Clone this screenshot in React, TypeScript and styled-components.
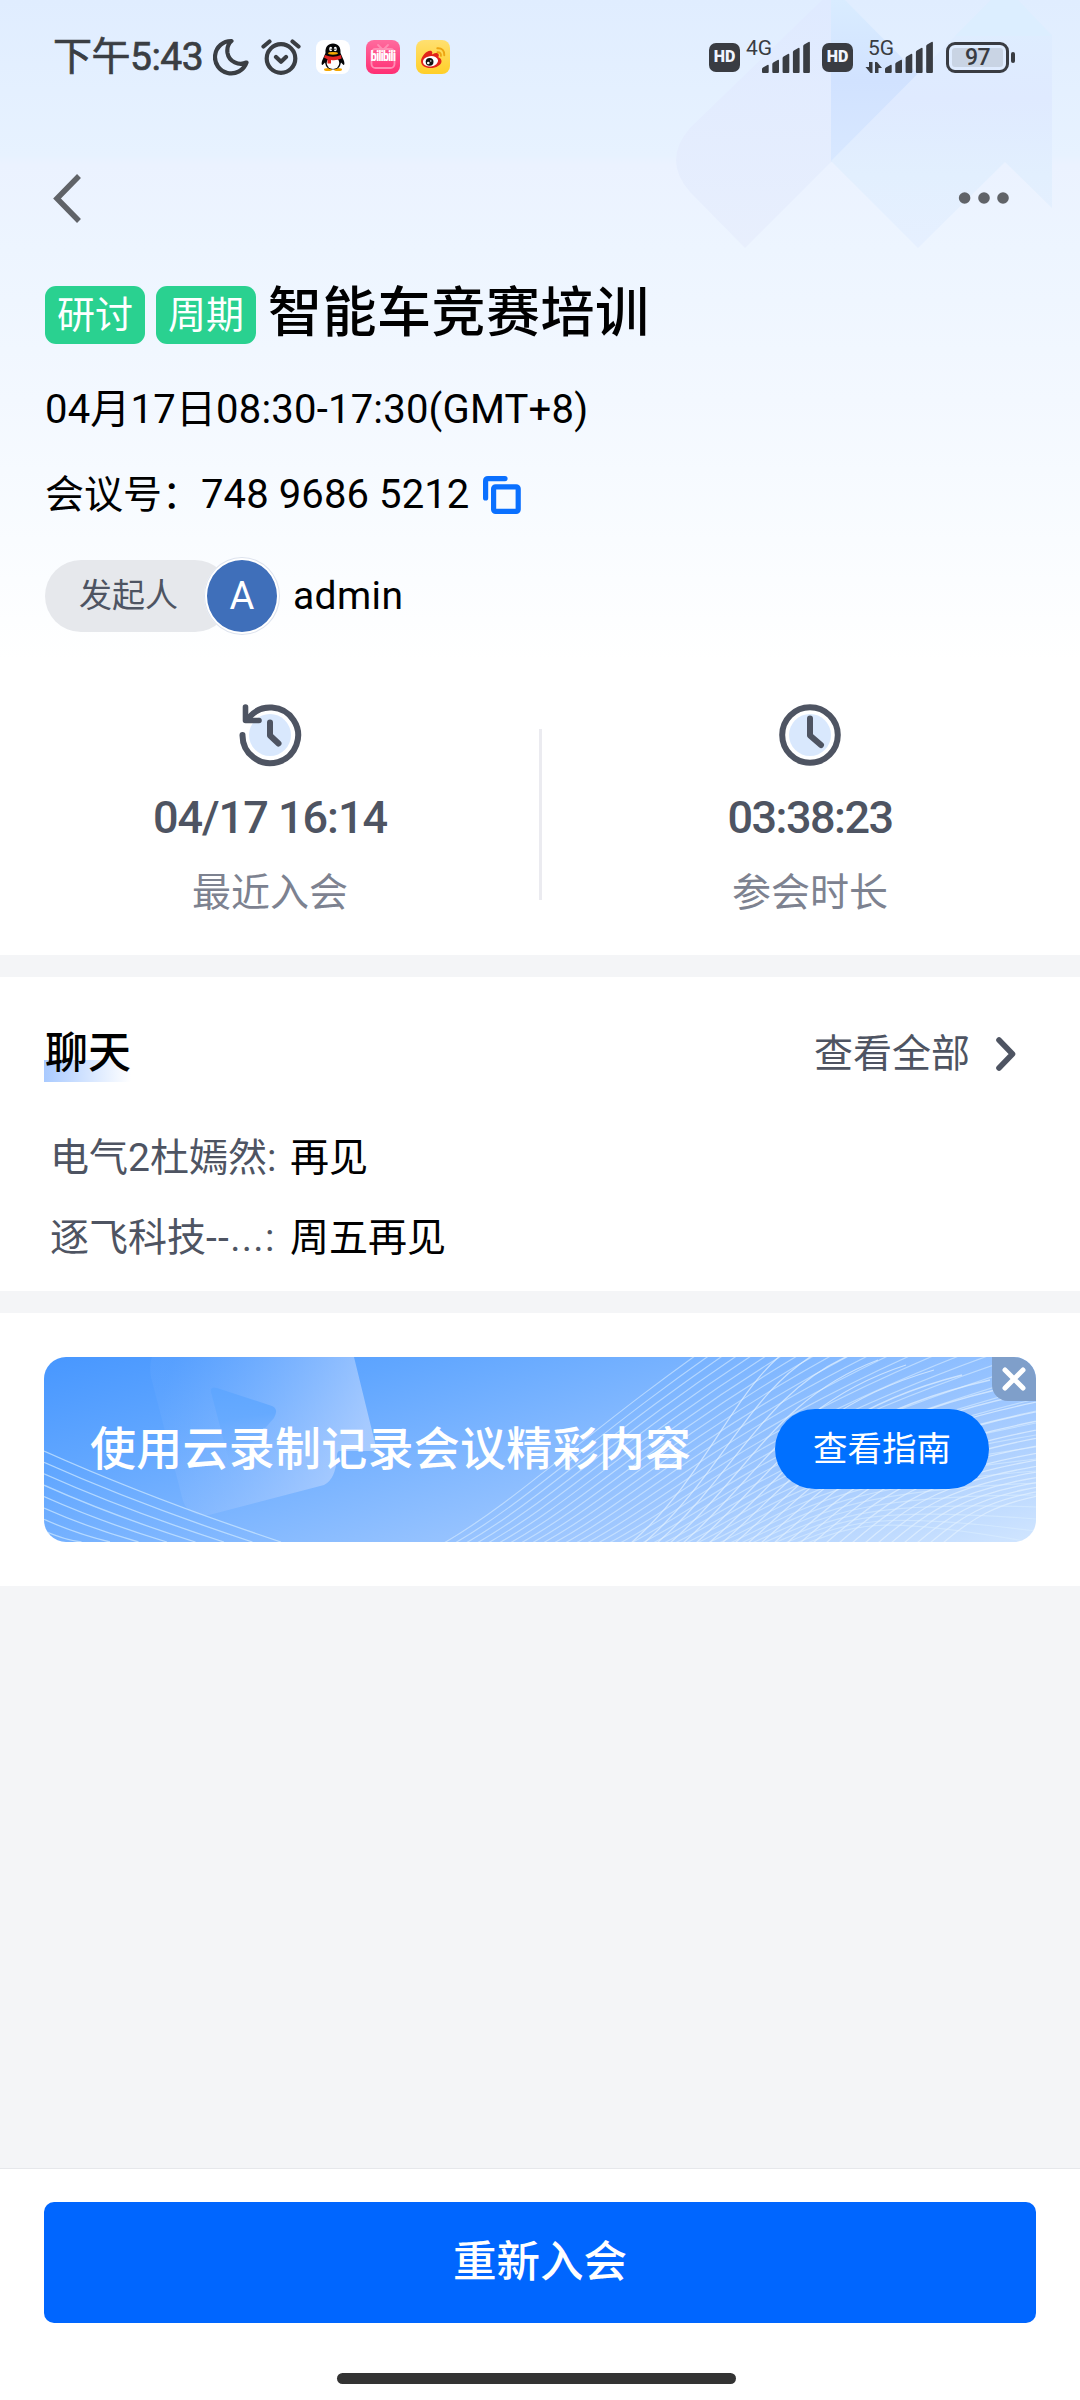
import React from "react";
import styled, { createGlobalStyle } from "styled-components";

const Global = createGlobalStyle`
  * { box-sizing: border-box; }
  body { margin: 0; background: #f4f5f7; }
`;

const sans = `Roboto, "Noto Sans CJK SC", sans-serif`;
const ink = "#4e5462";

const Screen = styled.main`
  width: 1080px;
  height: 2400px;
  display: flex;
  flex-direction: column;
  background: #f4f5f7;
  font-family: ${sans};
  color: #000;
  overflow: hidden;
  white-space: nowrap;
`;

const Label = styled.span<{ size: number; track?: number; color?: string }>`
  font-size: ${(p) => p.size}px;
  line-height: 1;
  letter-spacing: ${(p) => p.track ?? 0}px;
  color: ${(p) => p.color ?? "#000"};
`;

/* ---------- header ---------- */

const Header = styled.header`
  position: relative;
  height: 955px;
  flex: none;
  display: flex;
  flex-direction: column;
  background: linear-gradient(#e0edff 0, #e7f2ff 155px, #ebf2ff 165px, #edf5ff 250px, #f3f8ff 400px, #f9fcff 540px, #fff 660px);
`;

const Backdrop = styled.svg`
  position: absolute;
  top: 0;
  right: 0;
`;

const StatusBar = styled.div`
  position: relative;
  height: 114px;
  padding: 0 65px 0 53px;
  display: flex;
  align-items: center;
  justify-content: space-between;
`;

const StatusGroup = styled.div`
  display: flex;
  align-items: center;
`;

const Clock = styled.div`
  width: 160px;
  font-size: 39px;
  line-height: 40px;
  color: #3a3e43;
  -webkit-text-stroke: 0.7px #3a3e43;
  letter-spacing: -0.5px;
`;

const Gap = styled.i<{ w: number }>`
  width: ${(p) => p.w}px;
  flex: none;
`;

const HdBadge = styled.span`
  width: 31px;
  height: 29px;
  border-radius: 7px;
  display: grid;
  place-items: center;
  background: #393c42;
  color: #f0f5ff;
  font: 900 16px/1 ${sans};
`;

const Cell = styled.div`
  display: flex;
  height: 33px;
  position: relative;
`;

const NetLabel = styled.span<{ x: number }>`
  position: absolute;
  left: ${(p) => p.x}px;
  top: -3px;
  font: 400 21px/21px ${sans};
  color: #393c42;
`;

const Battery = styled.div`
  position: relative;
  width: 63px;
  height: 31px;
  border: 3px solid #393c42;
  border-radius: 9px;
  padding: 3px;
  &::after {
    content: "";
    position: absolute;
    left: 62px;
    top: 7px;
    width: 4px;
    height: 11px;
    border-radius: 2px;
    background: #393c42;
  }
`;

const BatteryFill = styled.div`
  height: 100%;
  border-radius: 3px;
  background: #c9d4e4;
  display: grid;
  place-items: center;
  font: 500 23px/19px ${sans};
  color: #393c42;
  letter-spacing: -0.5px;
`;

const NavBar = styled.nav`
  position: relative;
  height: 168px;
  padding: 0 70px 0 50px;
  display: flex;
  justify-content: space-between;
  svg { margin-top: 57px; }
`;

const TitleRow = styled.div`
  position: relative;
  height: 62px;
  margin-left: 45px;
  padding-top: 4px;
  display: flex;
  align-items: flex-start;
`;

const Tag = styled.span`
  width: 100px;
  height: 58px;
  margin-right: 11px;
  border-radius: 11px;
  display: grid;
  place-items: center;
  background: #2ad190;
  color: #fff;
  font-size: 38px;
  line-height: 58px;
`;

const Title = styled.h1`
  margin: 1px 0 0 1px;
  font-size: 54px;
  line-height: 54px;
  letter-spacing: 0.5px;
  font-weight: 500;
`;

const Line = styled.div<{ top: number }>`
  margin: ${(p) => p.top}px 0 0 45px;
  height: 44px;
  display: flex;
  align-items: center;
`;

const HostRow = styled.div`
  height: 78px;
  margin: 40px 0 0 45px;
  display: flex;
  align-items: center;
`;

const HostPill = styled.span`
  width: 186px;
  height: 72px;
  padding: 0 0 2px 34px;
  border-radius: 36px;
  display: flex;
  align-items: center;
  background: #e6e8ec;
`;

const Avatar = styled.span`
  width: 76px;
  height: 78px;
  margin: 0 13px 0 -27px;
  border: 3px solid #fff;
  outline: 1px solid #dde3ee;
  outline-offset: -1px;
  border-radius: 50%;
  display: grid;
  place-items: center;
  background: #3f6fba;
`;

const Stats = styled.div`
  margin-top: 68px;
  display: flex;
  height: 220px;
`;

const Stat = styled.div`
  flex: 1;
  display: flex;
  flex-direction: column;
  align-items: center;
`;

const Divider = styled.i`
  width: 3px;
  height: 171px;
  margin: 26px -1.5px 0;
  background: #ebebf0;
`;

const StatValue = styled.div<{ track: number }>`
  margin-top: 29px;
  font-size: 45px;
  line-height: 43px;
  font-weight: 500;
  color: ${ink};
  letter-spacing: ${(p) => p.track}px;
`;

const StatName = styled.div`
  margin-top: 35px;
  font-size: 39px;
  line-height: 39px;
  color: #7d8290;
`;

/* ---------- chat ---------- */

const Chat = styled.section`
  margin-top: 22px;
  height: 314px;
  flex: none;
  background: #fff;
  padding-left: 44px;
`;

const ChatHead = styled.div`
  height: 154px;
  padding: 0 58px 0 0;
  display: flex;
  align-items: center;
  justify-content: space-between;
`;

const ChatTitle = styled.h2`
  margin: 2px 0 0;
  height: 54px;
  padding-left: 1px;
  font-size: 43px;
  line-height: 50px;
  font-weight: 500;
  background: linear-gradient(90deg, #a9caff, #fff) 0 32px / 100% 22px no-repeat;
`;

const SeeAll = styled.div`
  display: flex;
  align-items: center;
  gap: 24px;
`;

const Message = styled.div`
  height: 80px;
  padding: 0 0 25px 6px;
  display: flex;
  align-items: center;
`;

const Sender = styled.div`
  width: 240px;
`;

/* ---------- banner ---------- */

const Promo = styled.section`
  margin-top: 22px;
  height: 273px;
  flex: none;
  padding: 44px;
  background: #fff;
`;

const Banner = styled.div`
  position: relative;
  height: 185px;
  border-radius: 22px;
  overflow: hidden;
  padding: 0 47px 0 46px;
  display: flex;
  align-items: center;
  justify-content: space-between;
`;

const BannerArt = styled.svg`
  position: absolute;
  inset: 0;
`;

const BannerText = styled.div`
  position: relative;
  font-size: 46px;
  line-height: 50px;
  font-weight: 500;
  letter-spacing: 0.25px;
  color: #fff;
  margin-bottom: 1px;
`;

const GuideButton = styled.button`
  position: relative;
  width: 214px;
  height: 80px;
  margin-top: -1px;
  border: 0;
  border-radius: 40px;
  background: #0070ff;
  padding: 0 0 1px;
  color: #fff;
  font: 400 34.5px/40px ${sans};
`;

const Close = styled.button`
  position: absolute;
  top: 0;
  right: 0;
  width: 44px;
  height: 44px;
  border: 0;
  padding: 0;
  border-radius: 0 22px 0 16px;
  background: #7f9fca;
  display: grid;
  place-items: center;
`;

/* ---------- footer ---------- */

const Footer = styled.footer`
  margin-top: auto;
  height: 232px;
  flex: none;
  border-top: 1px solid #e6e8eb;
  background: #fff;
  padding: 33px 44px 0;
  display: flex;
  flex-direction: column;
`;

const Rejoin = styled.button`
  height: 121px;
  border: 0;
  border-radius: 10px;
  background: #0066ff;
  color: #fff;
  padding: 1px 0 0;
  font: 500 43.5px/50px ${sans};
`;

const HomeBar = styled.i`
  width: 399px;
  height: 11px;
  margin: 50px 0 0 293px;
  border-radius: 6px;
  background: #333;
`;

/* ---------- icons ---------- */

const Signal = ({ offset, arrows }: { offset: number; arrows?: boolean }) => (
  <svg width={offset + 48} height="33" viewBox={`${-offset} 0 ${offset + 48} 33`} fill="#393c42">
    {[8, 13, 19, 25, 31].map((h, i) => (
      <path key={h} d={`M${i * 10.3} 32v${-(h - 4)}q0-1 1-1.6l4.4-2.4q1.3-.5 1.3.8V31q0 1-1 1h-4.7q-1 0-1-1z`} />
    ))}
    {arrows && <path d="M-12.500 21v11h-2l-5-6h3.500v-5zM-10 32v-11h2l5 6h-3.500v5z" />}
  </svg>
);

const Moon = () => (
  <svg width="36" height="38" viewBox="0 0 36 38" fill="none" stroke="#3a3e43" strokeWidth="4.200" strokeLinejoin="round" strokeLinecap="round">
    <path d="M18.500 3A16.200 16.200 0 1 0 33.500 24.500C26 28 16 24 14.500 15C13.800 10 15.500 5.500 18.500 3z" />
  </svg>
);

const Alarm = () => (
  <svg width="40" height="38" viewBox="0 0 40 38" fill="none" stroke="#3a3e43" strokeWidth="4.200" strokeLinecap="round" strokeLinejoin="round">
    <circle cx="20" cy="20.500" r="14.300" />
    <path d="M15 19l5 4.800 5-4.800M2.500 8.500l6-5M37.500 8.500l-6-5" />
  </svg>
);

const QQ = () => (
  <svg width="34" height="34" viewBox="0 0 34 34">
    <rect width="34" height="34" rx="8" fill="#fff" />
    <ellipse cx="12" cy="29.500" rx="4" ry="1.500" fill="#f5a800" />
    <ellipse cx="22" cy="29.500" rx="4" ry="1.500" fill="#f5a800" />
    <path d="M9.500 13C9 7 12 3.500 17 3.500S25 7 24.500 13L28 21q1 4-.5 4L25 22.500q-1 7-8 7t-8-7L6.500 25q-1.500 0-.5-4z" fill="#050505" />
    <ellipse cx="17" cy="23" rx="6.300" ry="6" fill="#fff" />
    <path d="M9 15q8 3.500 16 0l.6 3.500Q20 21 15 20v3.500h-3.500v-4.300L8 17.500z" fill="#e32422" />
    <ellipse cx="14.700" cy="9" rx="1.500" ry="2.200" fill="#fff" />
    <ellipse cx="19.300" cy="9" rx="1.500" ry="2.200" fill="#fff" />
    <circle cx="15.200" cy="9.300" r=".7" /><circle cx="18.900" cy="9.300" r=".7" />
    <ellipse cx="17" cy="13.300" rx="5" ry="1.400" fill="#f5a800" />
  </svg>
);

const Bili = styled.span`
  width: 34px;
  height: 34px;
  border-radius: 8px;
  background: linear-gradient(#ff6b9e, #ff2f74);
  display: grid;
  place-items: center;
  position: relative;
  color: #fff;
  font: 700 10.500px/1 ${sans};
  letter-spacing: -0.6px;
  svg { position: absolute; inset: 0; }
  b { position: relative; transform: scaleY(1.35); }
`;

const Weibo = () => (
  <svg width="34" height="34" viewBox="0 0 34 34">
    <defs>
      <linearGradient id="wb" x2="0" y2="1"><stop stopColor="#ffe070" /><stop offset="1" stopColor="#ffcf28" /></linearGradient>
    </defs>
    <rect width="34" height="34" rx="8" fill="url(#wb)" />
    <path d="M5 21C5 16 12 9 15.500 11q1.500 1 .5 3.500 5-2.500 6.500-.5 .8 1.200-.2 3.200 3.200 1 3.200 4C25.500 25 20 28 14.500 28S5 25.500 5 21z" fill="#e2231a" />
    <ellipse cx="14.500" cy="21.300" rx="7.600" ry="5.200" fill="#fff" transform="rotate(-7 14.500 21.300)" />
    <circle cx="13.600" cy="21.800" r="3.900" fill="#111" />
    <circle cx="12.300" cy="23" r="1.300" fill="#fff" /><circle cx="14.800" cy="21" r=".7" fill="#fff" />
    <path d="M21.500 12.300q3.800-.2 3.400 3.500M21.300 8.300q7.200-.4 7 7" fill="none" stroke="#eda512" strokeWidth="1.900" strokeLinecap="round" />
  </svg>
);

const CopyIcon = () => (
  <svg width="38" height="38" viewBox="0 0 38 38" fill="none" stroke="#0a70ff" strokeWidth="5.200" strokeLinecap="round" strokeLinejoin="round">
    <rect x="10.600" y="10.800" width="24.600" height="24.600" rx="2" />
    <path d="M2.600 22V5q0-2.400 2.400-2.400h17" />
  </svg>
);

const HistoryIcon = () => (
  <svg width="64" height="64" viewBox="0 0 64 64" fill="none" stroke={ink} strokeWidth="6" strokeLinecap="round" strokeLinejoin="round">
    <circle cx="32" cy="32" r="21" fill="#d9e8fd" stroke="none" />
    <path d="M4.500 32A27.800 27.800 0 1 0 11 14.500" />
    <path d="M7.500 4v13.500h13.500" strokeWidth="5.600" />
    <path d="M32 19.500V32.500l8.500 8" />
  </svg>
);

const DurationIcon = () => (
  <svg width="64" height="64" viewBox="0 0 64 64" fill="none" stroke={ink} strokeWidth="6" strokeLinecap="round" strokeLinejoin="round">
    <circle cx="32" cy="32" r="21" fill="#d9e8fd" stroke="none" />
    <circle cx="32" cy="32" r="27.800" />
    <path d="M32 15.500V32.500l11 9.500" />
  </svg>
);

const range = (n: number) => Array.from({ length: n }, (_, i) => i);

const BannerArtwork = () => (
  <BannerArt width="992" height="185" viewBox="0 0 992 185" fill="none">
    <defs>
      <linearGradient id="sky" gradientUnits="userSpaceOnUse" x1="330" y1="-150" x2="480" y2="350">
        <stop stopColor="#3c90ff" /><stop offset=".3" stopColor="#60a6ff" /><stop offset=".72" stopColor="#a0c8ff" /><stop offset="1" stopColor="#d5e8ff" />
      </linearGradient>
      <linearGradient id="sheet" gradientUnits="userSpaceOnUse" x1="115" y1="50" x2="310" y2="110">
        <stop stopColor="#8abaff" stopOpacity=".12" /><stop offset="1" stopColor="#bdd6ff" stopOpacity=".7" />
      </linearGradient>
      <linearGradient id="play" gradientUnits="userSpaceOnUse" x1="180" y1="30" x2="190" y2="110">
        <stop stopColor="#5fa6ff" /><stop offset=".4" stopColor="#66aaff" /><stop offset="1" stopColor="#78b2ff" stopOpacity="0" />
      </linearGradient>
    </defs>
    <rect width="992" height="185" fill="url(#sky)" />
    <path d="M108 0H310L332 90Q333 94 328 94H296Q293 94 293 99Q292 122 280 128L165 158Q142 160 138 140L107 20Q105 8 108 0Z" fill="url(#sheet)" />
    <path d="M167 35Q166 29 173 31L228 49Q235 52 230 61L192 104Q186 107 184 100Z" fill="url(#play)" />
    <g stroke="#c9e6ff" strokeOpacity=".75" strokeWidth="1.300">
      {range(8).map((i) => (
        <path key={i} d={`M0 ${94 + i * 11.4}Q${105 - i * 12} ${141 + i * 6} ${237 - i * 28.5} 185`} />
      ))}
    </g>
    <g stroke="#d8ecff" strokeOpacity=".6" strokeWidth="1.200">
      {range(34).map((i) => (
        <path key={i} d={`M${400 + i * 11} 186C${520 + i * 9} ${116 + i * 1.5} ${610 + i * 7} ${-6 + i * 5} ${992} ${-210 + i * 12}`} />
      ))}
    </g>
    <g stroke="#e2f1ff" strokeOpacity=".7" strokeWidth="1.300">
      {range(25).map((i) => (
        <path key={i} d={`M${587 + i * 13} 186C${665 + i * 13} ${118} ${690 + i * 14} ${28 + i * 4.5} ${750 + i * 28} ${-12 + i * 5}`} />
      ))}
    </g>
  </BannerArt>
);

export default function App() {
  return (
    <Screen>
      <Global />
      <Header>
        <Backdrop width="420" height="260" viewBox="660 0 420 260">
          <defs>
            <linearGradient id="fold" x2="0" y2="1"><stop stopColor="#d9ecff" /><stop offset=".5" stopColor="#d1e2ff" /><stop offset="1" stopColor="#d8e8ff" /></linearGradient>
            <linearGradient id="wing" x2="0" y2="1"><stop stopColor="#dfeaff" /><stop offset="1" stopColor="#e8effd" /></linearGradient>
            <linearGradient id="right" x2="0" y2="1"><stop stopColor="#deeeff" /><stop offset=".4" stopColor="#dfeaff" /><stop offset=".7" stopColor="#e2effe" /><stop offset="1" stopColor="#e6f0ff" /></linearGradient>
          </defs>
          <path d="M822 0L690 128Q662 160 690 192L745 248L832 161V0Z" fill="url(#wing)" />
          <path d="M831 0H845L919 75L831 162Z" fill="url(#fold)" />
          <path d="M991 0L831 161L918 248L1005 162L1052 208V35L1018 0Z" fill="url(#right)" />
          <path d="M991 0L955 36H1052L1018 0Z" fill="#dceeff" />
        </Backdrop>
        <StatusBar>
          <StatusGroup>
            <Clock>下午5:43</Clock>
            <Moon />
            <Gap w={12} />
            <Alarm />
            <Gap w={15} />
            <QQ />
            <Gap w={16} />
            <Bili>
              <svg viewBox="0 0 34 34" fill="none" stroke="#ff8db4" strokeWidth="1.800" strokeLinecap="round">
                <rect x="5.500" y="9" width="23" height="19" rx="4" /><path d="M12 5l4 4M22 5l-4 4" />
              </svg>
              <b>bilibili</b>
            </Bili>
            <Gap w={16} />
            <Weibo />
          </StatusGroup>
          <StatusGroup>
            <HdBadge>HD</HdBadge>
            <Gap w={6} />
            <Cell><NetLabel x={0}>4G</NetLabel><Signal offset={16} /></Cell>
            <Gap w={12} />
            <HdBadge>HD</HdBadge>
            <Gap w={12} />
            <Cell><NetLabel x={3}>5G</NetLabel><Signal offset={20} arrows /></Cell>
            <Gap w={13} />
            <Battery><BatteryFill>97</BatteryFill></Battery>
            <Gap w={6} />
          </StatusGroup>
        </StatusBar>
        <NavBar>
          <svg width="36" height="56" viewBox="0 0 36 56" fill="none" stroke="#606368" strokeWidth="5.500">
            <path d="M29 5L7 27.500L29 50" />
          </svg>
          <svg width="56" height="56" viewBox="0 0 56 56" fill="#606368">
            <circle cx="10.600" cy="27" r="5.800" /><circle cx="30" cy="27" r="5.800" /><circle cx="49" cy="27" r="5.800" />
          </svg>
        </NavBar>
        <TitleRow>
          <Tag>研讨</Tag>
          <Tag>周期</Tag>
          <Title>智能车竞赛培训</Title>
        </TitleRow>
        <Line top={44}><Label size={40} track={0.2}>04月17日08:30-17:30(GMT+8)</Label></Line>
        <Line top={41}>
          <Label size={39}>会议号：</Label>
          <Label size={40} track={0.1}>748 9686 5212</Label>
          <Gap w={14} />
          <CopyIcon />
        </Line>
        <HostRow>
          <HostPill><Label size={33} color={ink}>发起人</Label></HostPill>
          <Avatar><Label size={38} color="#fff">A</Label></Avatar>
          <Label size={39} track={0.4}>admin</Label>
        </HostRow>
        <Stats>
          <Stat>
            <HistoryIcon />
            <StatValue track={-1}>04/17 16:14</StatValue>
            <StatName>最近入会</StatName>
          </Stat>
          <Divider />
          <Stat>
            <DurationIcon />
            <StatValue track={-1.5}>03:38:23</StatValue>
            <StatName>参会时长</StatName>
          </Stat>
        </Stats>
      </Header>

      <Chat>
        <ChatHead>
          <ChatTitle>聊天</ChatTitle>
          <SeeAll>
            <Label size={39} color={ink}>查看全部</Label>
            <svg width="28" height="40" viewBox="0 0 28 40" fill="none" stroke={ink} strokeWidth="5.600" strokeLinecap="round" strokeLinejoin="round">
              <path d="M5 6L18.500 20L5 34" />
            </svg>
          </SeeAll>
        </ChatHead>
        <Message>
          <Sender><Label size={39} color={ink}>电气2杜嫣然:</Label></Sender>
          <Label size={39}>再见</Label>
        </Message>
        <Message>
          <Sender>
            <Label size={39} color={ink}>逐飞科技</Label>
            <Label size={39} color={ink} track={1.3}>--...:</Label>
          </Sender>
          <Label size={39}>周五再见</Label>
        </Message>
      </Chat>

      <Promo>
        <Banner>
          <BannerArtwork />
          <BannerText>使用云录制记录会议精彩内容</BannerText>
          <GuideButton>查看指南</GuideButton>
          <Close>
            <svg width="30" height="30" viewBox="0 0 30 30" stroke="#fff" strokeWidth="5" strokeLinecap="round"><path d="M6 6l18 18M24 6L6 24" /></svg>
          </Close>
        </Banner>
      </Promo>

      <Footer>
        <Rejoin>重新入会</Rejoin>
        <HomeBar />
      </Footer>
    </Screen>
  );
}
